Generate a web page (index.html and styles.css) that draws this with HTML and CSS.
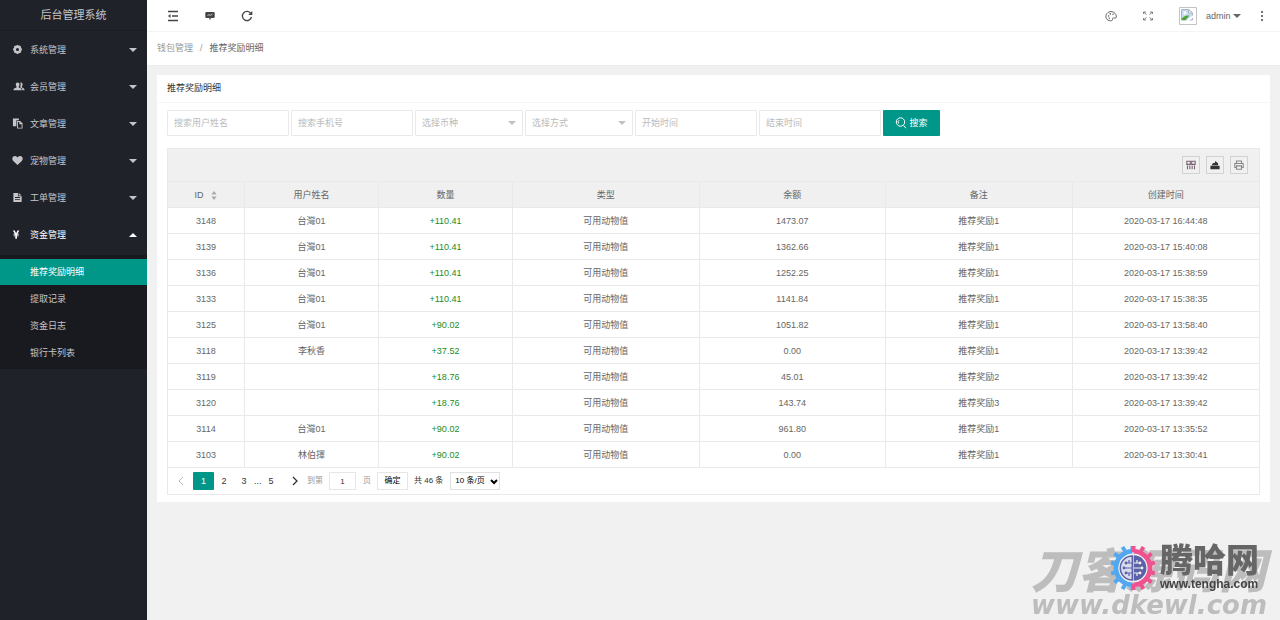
FILE: index.html
```html
<!DOCTYPE html>
<html lang="zh-CN">
<head>
<meta charset="utf-8">
<title>后台管理系统</title>
<meta name="viewport" content="width=device-width, initial-scale=1">
<link rel="stylesheet" href="styles.css">
</head>
<body>
<div class="app">
  <aside class="side">
    <div class="brand">后台管理系统</div>
    <nav class="menu">
      <button class="menu-item" type="button"><svg class="mi" viewBox="0 0 12 12"><path fill-rule="evenodd" d="M5 1h2l.4 1.2 1.2-.5 1.5 1.5-.6 1.2 1.3.4v2.2l-1.3.4.6 1.2-1.5 1.5-1.2-.5L7 11H5l-.4-1.400-1.200.5-1.500-1.500.6-1.200L1.200 7V4.800l1.300-.4-.6-1.200 1.500-1.500 1.200.5zM6 4.300a1.700 1.700 0 1 0 0 3.400 1.700 1.700 0 0 0 0-3.400z"/></svg><span>系统管理</span><svg class="caret" viewBox="0 0 8 4"><path d="M0 0h8L4 4z"/></svg></button>
      <button class="menu-item" type="button"><svg class="mi wide" viewBox="0 0 12 12"><path d="M4.500 1.500c1.500 0 2 1 2 2.200 0 1-.4 1.800-.8 2.300v1l2.600 1.300c.5.300.7.700.7 1.700H0c0-1 .2-1.400.7-1.700L3.300 7V6c-.5-.5-.8-1.300-.8-2.300 0-1.200.5-2.200 2-2.200zM8 1.500c1.400 0 1.900 1 1.900 2.200 0 1-.4 1.800-.8 2.300v.8l2.200 1.300c.6.300.7.900.7 1.900H9.700c0-1.300-.3-1.900-1-2.300L7 6.700c.5-.7.800-1.800.8-3 0-.8-.2-1.500-.6-2z"/></svg><span>会员管理</span><svg class="caret" viewBox="0 0 8 4"><path d="M0 0h8L4 4z"/></svg></button>
      <button class="menu-item" type="button"><svg class="mi" viewBox="0 0 12 12"><path fill-rule="evenodd" d="M1 .5h6.500v2H4.800V9H1zM5.500 3.300h3.300l2.700 2.500v5.700h-6zM6.500 4.300v6.200h4V6.800H8V4.300z"/></svg><span>文章管理</span><svg class="caret" viewBox="0 0 8 4"><path d="M0 0h8L4 4z"/></svg></button>
      <button class="menu-item" type="button"><svg class="mi" viewBox="0 0 12 12"><path d="M6 11L1.300 6.500C-1 4 1 1 3.300 1.200 4.700 1.300 5.500 2 6 2.800c.5-.8 1.300-1.500 2.700-1.600C11 1 13 4 10.700 6.500z"/></svg><span>宠物管理</span><svg class="caret" viewBox="0 0 8 4"><path d="M0 0h8L4 4z"/></svg></button>
      <button class="menu-item" type="button"><svg class="mi" viewBox="0 0 12 12"><path fill-rule="evenodd" d="M1.500 1h5v3.500h4V11h-9zM7.300 1l3.200 2.800H7.300zM3.300 5.500v1h5.400v-1zm0 2.300v1h5.400v-1z"/></svg><span>工单管理</span><svg class="caret" viewBox="0 0 8 4"><path d="M0 0h8L4 4z"/></svg></button>
      <button class="menu-item open" type="button" aria-expanded="true"><svg class="mi" viewBox="0 0 12 12"><path d="M1 1.500h2l1.500 3 1.500-3h2L6 5.200h1.300v1H5.400v.8h1.900v1H5.400v2.500H3.600V8H1.700V7h1.900v-.8H1.700v-1H3z"/></svg><span>资金管理</span><svg class="caret" viewBox="0 0 8 4"><path d="M0 4h8L4 0z"/></svg></button>
      <div class="sub">
        <a class="sub-item active" href="#">推荐奖励明细</a>
        <a class="sub-item" href="#">提取记录</a>
        <a class="sub-item" href="#">资金日志</a>
        <a class="sub-item" href="#">银行卡列表</a>
      </div>
    </nav>
  </aside>

  <div class="main">
    <header class="top">
      <div class="top-group">
        <button class="tool" type="button" aria-label="收起菜单"><svg class="ti" viewBox="0 0 12 12"><path d="M1 1.500h10M5 6h6M1 10.500h10" class="ln"/><path d="M1 6l2.500-2v4z"/></svg></button>
        <button class="tool" type="button" aria-label="消息"><svg class="ti" viewBox="0 0 12 12"><path d="M2.500 2h7q1.200 0 1.200 1v4q0 1-1.200 1H6.800L6 10.500 5.200 8H2.500Q1.300 8 1.300 7V3q0-1 1.200-1z"/><path d="M3.500 5.500l1.500-.8 1.500.6 2-1.200" class="ln light"/></svg></button>
        <button class="tool" type="button" aria-label="刷新"><svg class="ti" viewBox="0 0 12 12"><path d="M9.800 3.400A4.600 4.600 0 1 0 10.500 7" class="ln"/><path d="M11.300 1v4H7.200z"/></svg></button>
      </div>
      <div class="top-group">
        <button class="tool soft" type="button" aria-label="主题"><svg class="ti" viewBox="0 0 12 12"><path d="M3 10.200C.5 9 .3 5.500 2 3.500 4 1 8 1 10 3.300c1.300 1.400 1.800 3.700.8 4.700-.9.900-2-.7-3 .1-.8.700.2 1.700-.6 2.300-.7.500-2.700.5-4.200-.2z" class="ln thin"/><circle cx="3.500" cy="6" r=".8"/><circle cx="5.300" cy="3.900" r=".8"/><circle cx="8" cy="4.300" r=".8"/><circle cx="4.300" cy="8.300" r=".8"/></svg></button>
        <button class="tool soft" type="button" aria-label="全屏"><svg class="ti" viewBox="0 0 12 12"><path d="M1.500 4V2H4M2 2.500l2.500 2M8 2h2.500v2M10 2.500l-2.500 2M1.500 8v2H4M2 9.500l2.500-2M8 10h2.500V8M10 9.500l-2.500-2" class="ln faint"/></svg></button>
        <button class="user" type="button"><svg class="avatar" viewBox="0 0 18 18"><path d="M.5.500h17v17H.5z" fill="#fff" stroke="#c4c4c4"/><path d="M2.500 2.500h7l4 3.500v7h-11z" fill="#c9dcf5" stroke="#a9b4c2"/><path d="M9.500 2.500V6h4z" fill="#fff" stroke="#a9b4c2"/><circle cx="6" cy="6" r="1.500" fill="#fff"/><path d="M2.500 13c.5-3 4-5 8-4.500L6.500 13z" fill="#4ca532"/><path d="M7.500 14.500l7-5.500" stroke="#fff" stroke-width="2"/></svg><span>admin</span><svg class="caret" viewBox="0 0 8 4"><path d="M0 0h8L4 4z"/></svg></button>
        <button class="tool" type="button" aria-label="更多"><svg class="ti" viewBox="0 0 12 12"><circle cx="6" cy="2" r="1"/><circle cx="6" cy="6" r="1"/><circle cx="6" cy="10" r="1"/></svg></button>
      </div>
    </header>
    <div class="crumbs"><a href="#">钱包管理</a><span class="sep">/</span><span class="here">推荐奖励明细</span></div>

    <section class="card">
      <h1 class="card-title">推荐奖励明细</h1>
      <div class="card-body">
        <form class="search">
          <input class="field" type="text" placeholder="搜索用户姓名" aria-label="搜索用户姓名">
          <input class="field" type="text" placeholder="搜索手机号" aria-label="搜索手机号">
          <div class="pick"><select class="field" aria-label="选择币种"><option>选择币种</option></select><svg class="caret" viewBox="0 0 8 4"><path d="M0 0h8L4 4z"/></svg></div>
          <div class="pick"><select class="field" aria-label="选择方式"><option>选择方式</option></select><svg class="caret" viewBox="0 0 8 4"><path d="M0 0h8L4 4z"/></svg></div>
          <input class="field" type="text" placeholder="开始时间" aria-label="开始时间">
          <input class="field" type="text" placeholder="结束时间" aria-label="结束时间">
          <button class="go" type="button"><svg class="ti" viewBox="0 0 12 12"><circle cx="5.500" cy="5" r="4.200" class="ln thin"/><path d="M3.500 6.500A2.500 2.500 0 0 1 4 3.200M8.500 8.500l2.500 2.700" class="ln thin"/></svg>搜索</button>
        </form>

        <div class="grid">
          <div class="bar">
            <button class="bar-btn" type="button" aria-label="筛选列"><svg class="ti" viewBox="0 0 12 12"><path d="M1 1.500h4.200v3.700H1zM6.800 1.500H11v3.700H6.800zM1.800 6.500V11M4.600 6.500V11M7.400 6.500V11M10.200 6.500V11" class="ln plum"/></svg></button>
            <button class="bar-btn" type="button" aria-label="导出"><svg class="ti" viewBox="0 0 12 12"><path d="M.5 7h11v4H.5zM2.200 6.200C2.500 4 4.500 3.200 6 3.200V1.200L9.800 4 9.500 6.200z"/></svg></button>
            <button class="bar-btn pale" type="button" aria-label="打印"><svg class="ti" viewBox="0 0 12 12"><path d="M3 4V1.200h6V4M3 9H1V4.200h10V9H9M3 7h6v4H3z" class="ln"/></svg></button>
          </div>
          <table class="data">
            <colgroup><col class="c-id"><col class="c-mid"><col class="c-mid"><col><col><col><col></colgroup>
            <thead><tr><th>ID<svg class="sort" viewBox="0 0 8 10"><path d="M1 4l3-4 3 4zM1 6l3 4 3-4z"/></svg></th><th>用户姓名</th><th>数量</th><th>类型</th><th>余额</th><th>备注</th><th>创建时间</th></tr></thead>
            <tbody>
              <tr><td>3148</td><td>台灣01</td><td class="plus">+110.41</td><td>可用动物值</td><td>1473.07</td><td>推荐奖励1</td><td>2020-03-17 16:44:48</td></tr>
              <tr><td>3139</td><td>台灣01</td><td class="plus">+110.41</td><td>可用动物值</td><td>1362.66</td><td>推荐奖励1</td><td>2020-03-17 15:40:08</td></tr>
              <tr><td>3136</td><td>台灣01</td><td class="plus">+110.41</td><td>可用动物值</td><td>1252.25</td><td>推荐奖励1</td><td>2020-03-17 15:38:59</td></tr>
              <tr><td>3133</td><td>台灣01</td><td class="plus">+110.41</td><td>可用动物值</td><td>1141.84</td><td>推荐奖励1</td><td>2020-03-17 15:38:35</td></tr>
              <tr><td>3125</td><td>台灣01</td><td class="plus">+90.02</td><td>可用动物值</td><td>1051.82</td><td>推荐奖励1</td><td>2020-03-17 13:58:40</td></tr>
              <tr><td>3118</td><td>李秋香</td><td class="plus">+37.52</td><td>可用动物值</td><td>0.00</td><td>推荐奖励1</td><td>2020-03-17 13:39:42</td></tr>
              <tr><td>3119</td><td></td><td class="plus">+18.76</td><td>可用动物值</td><td>45.01</td><td>推荐奖励2</td><td>2020-03-17 13:39:42</td></tr>
              <tr><td>3120</td><td></td><td class="plus">+18.76</td><td>可用动物值</td><td>143.74</td><td>推荐奖励3</td><td>2020-03-17 13:39:42</td></tr>
              <tr><td>3114</td><td>台灣01</td><td class="plus">+90.02</td><td>可用动物值</td><td>961.80</td><td>推荐奖励1</td><td>2020-03-17 13:35:52</td></tr>
              <tr><td>3103</td><td>林伯擇</td><td class="plus">+90.02</td><td>可用动物值</td><td>0.00</td><td>推荐奖励1</td><td>2020-03-17 13:30:41</td></tr>
            </tbody>
          </table>
          <div class="pager">
            <button class="pg off" type="button" aria-label="上一页"><svg class="arr" viewBox="0 0 6 10"><path d="M5 1L1 5l4 4" class="ln thin"/></svg></button>
            <button class="pg on" type="button">1</button>
            <button class="pg" type="button">2</button>
            <button class="pg" type="button">3</button>
            <span class="dots">...</span>
            <button class="pg" type="button">5</button>
            <button class="pg next" type="button" aria-label="下一页"><svg class="arr" viewBox="0 0 6 10"><path d="M1 1l4 4-4 4" class="ln"/></svg></button>
            <label class="jump">到第<input class="num" type="text" value="1">页</label>
            <button class="ok" type="button">确定</button>
            <span class="total">共 46 条</span>
            <div class="size-box"><select class="size" aria-label="每页条数"><option>10 条/页</option></select><svg class="chev" viewBox="0 0 8 6"><path d="M1 1l3 3 3-3"/></svg></div>
          </div>
        </div>
      </div>
    </section>
  </div>
</div>

<div class="mark">
  <div class="mark-name">刀客源码网</div>
  <div class="mark-url">www.dkewl.com</div>
  <div class="logo">
    <svg class="gear" viewBox="0 0 44 44">
      <g fill="none" stroke="#52a8f0"><path d="M21.500 5.500a16.500 16.500 0 0 0 0 33" stroke-width="5"/><path d="M21.500 0v6M14 5L11.500 1M7 10.500L3.500 7.500M4.500 18L0 16.500M4.500 26L0 27.500M7 33.500L3.500 36.500M14 39L11.500 43M21.500 38v6" stroke-width="4"/></g>
      <g fill="none" stroke="#f0528f"><path d="M22.500 5.500a16.500 16.500 0 0 1 0 33" stroke-width="5"/><path d="M22.500 0v6M30 5L32.500 1M37 10.500L40.500 7.500M39.500 18L44 16.500M39.500 26L44 27.500M37 33.500L40.500 36.500M30 39L32.500 43M22.500 38v6" stroke-width="4"/></g>
      <circle cx="22" cy="22" r="14.500" fill="#f1f1f1"/>
      <path d="M21.300 10a12 12 0 0 0 0 24z" fill="#d9dced" stroke="#5b62a8" stroke-width="1.500"/>
      <path d="M22.700 9.300a12.700 12.700 0 0 1 0 25.400z" fill="#5b62a8"/>
      <path d="M21 17h-5M21 22h-8M21 27h-5M18 17v-3M18 27v3" fill="none" stroke="#5b62a8" stroke-width="1.200"/>
      <path d="M23 17h5M23 22h8M23 27h5M26 17v-3M26 27v3" fill="none" stroke="#f1f1f1" stroke-width="1.200"/>
      <g fill="#5b62a8"><circle cx="15" cy="17" r="1.400"/><circle cx="13" cy="22" r="1.400"/><circle cx="15" cy="27" r="1.400"/></g>
      <g fill="#f1f1f1"><circle cx="29" cy="17" r="1.400"/><circle cx="31" cy="22" r="1.400"/><circle cx="29" cy="27" r="1.400"/></g>
    </svg>
    <div class="logo-text"><span class="logo-name">腾哈网</span><span class="logo-url">www.tengha.com</span></div>
  </div>
</div>
</body>
</html>
```
FILE: styles.css
```css
* { box-sizing: border-box; }
body {
  margin: 0;
  background: #f1f1f1;
  color: #666;
  font: 9px/12px "Liberation Sans", "Noto Sans CJK SC", sans-serif;
}
button, input, select { font: inherit; color: inherit; margin: 0; padding: 0; }
button { border: 0; background: none; }
a { color: inherit; text-decoration: none; }
svg { display: block; flex: none; fill: currentColor; }
.ln { fill: none; stroke: currentColor; stroke-width: 1.3; }
.thin { stroke-width: 1; }
.faint { stroke-width: 0.8; }
.light { stroke: #fff; stroke-width: 0.7; }
.plum { stroke: #7a6273; }
.caret { width: 8px; height: 4px; }

.app { display: flex; min-height: 100vh; }

/* Sidebar */
.side { flex: none; width: 147px; background: #20222a; color: #c4c5c8; }
.brand {
  height: 31px;
  border-bottom: 1px solid #1b1d24;
  font-size: 11px;
  line-height: 30px;
  text-align: center;
}
.menu { display: flex; flex-direction: column; }
.menu-item {
  display: flex;
  align-items: center;
  height: 37px;
  padding: 0 10px 0 12px;
  text-align: left;
}
.menu-item span { flex: 1; }
.menu-item.open { color: #fff; }
.mi { width: 11px; height: 11px; margin-right: 7px; }
.mi.wide { width: 14px; margin-right: 4px; }
.sub {
  display: flex;
  flex-direction: column;
  gap: 1px;
  margin-top: 2px;
  padding: 4px 0 3px;
  background: #191a20;
}
.sub-item { padding: 0 30px; line-height: 26px; }
.sub-item.active { background: #009688; color: #fff; }

/* Top bar */
.main { flex: 1; min-width: 0; }
.top {
  display: flex;
  justify-content: space-between;
  height: 32px;
  padding-left: 7px;
  border-bottom: 1px solid #f4f4f4;
  background: #fff;
}
.top-group { display: flex; }
.tool { display: flex; align-items: center; justify-content: center; width: 37px; color: #444; }
.tool.soft { color: #666; }
.ti { width: 12px; height: 12px; }
.user { display: flex; align-items: center; width: 77px; padding-left: 13px; }
.user .avatar { width: 18px; height: 18px; margin-right: 9px; }
.user .caret { margin-left: 2px; }
.crumbs {
  height: 34px;
  padding: 0 10px;
  border-bottom: 1px solid #ececec;
  background: #fff;
  color: #999;
  line-height: 33px;
}
.sep { margin: 0 7px; }
.here { color: #666; }

/* Card */
.card { margin: 9px 10px; background: #fff; }
.card-title {
  margin: 0;
  padding: 0 10px;
  border-bottom: 1px solid #f6f6f6;
  color: #333;
  font-size: 9px;
  font-weight: 400;
  line-height: 27px;
}
.card-body { padding: 7px 10px; }
.search { display: flex; flex-wrap: wrap; gap: 2px; margin-bottom: 12px; }
.field {
  width: 122px;
  height: 26px;
  padding: 0 6px;
  border: 1px solid #e9e9e9;
  border-radius: 1px;
  background: #fff;
}
.field::placeholder { color: #bbb; }
.pick { position: relative; }
.pick .field { width: 108px; color: #bbb; appearance: none; }
.pick .caret { position: absolute; top: 11px; right: 7px; color: #c2c2c2; pointer-events: none; }
.go {
  display: flex;
  align-items: center;
  justify-content: center;
  gap: 2px;
  width: 57px;
  border-radius: 1px;
  background: #009688;
  color: #fff;
}

/* Table */
.grid { border: 1px solid #e9e9e9; }
.bar {
  display: flex;
  justify-content: flex-end;
  gap: 6px;
  padding: 7px 11px;
  border-bottom: 1px solid #e9e9e9;
  background: #f0f0f0;
}
.bar-btn {
  display: grid;
  place-items: center;
  width: 18px;
  height: 18px;
  border: 1px solid #d2d2d2;
  color: #333;
}
.bar-btn .ti { width: 10px; height: 10px; }
.bar-btn.pale { color: #888; }
.data { width: 100%; border-collapse: separate; border-spacing: 0; table-layout: fixed; }
.c-id { width: 77px; }
.c-mid { width: 134px; }
.data th, .data td {
  height: 26px;
  padding: 0;
  border-right: 1px solid #e9e9e9;
  border-bottom: 1px solid #e9e9e9;
  font-weight: 400;
  text-align: center;
}
.data th { background: #f0f0f0; }
.data th:last-child, .data td:last-child { border-right: 0; }
.data .plus { color: #228b22; }
.sort { display: inline-block; width: 8px; height: 9px; margin-left: 6px; color: #aaa; vertical-align: -2px; }

/* Pager */
.pager { display: flex; align-items: center; height: 26px; padding-left: 3px; font-size: 8px; color: #333; }
.pg { display: grid; place-items: center; width: 20px; height: 18px; font-size: 9px; }
.pg.on { width: 21px; margin-left: 2px; border-radius: 1px; background: #009688; color: #fff; }
.pg.off { color: #bbb; }
.pg.next { width: 26px; padding-left: 2px; }
.arr { width: 6px; height: 10px; }
.dots { width: 7px; font-size: 9px; text-align: center; }
.jump { display: flex; align-items: center; color: #999; }
.num {
  width: 27px;
  height: 18px;
  margin: 0 7px 0 6px;
  border: 1px solid #e6e6e6;
  color: #333;
  text-align: center;
}
.ok { width: 31px; height: 18px; margin: 0 6px; border: 1px solid #e6e6e6; color: #000; }
.size-box { position: relative; margin-left: 7px; }
.size {
  width: 50px;
  height: 18px;
  padding-left: 4px;
  border: 1px solid #e0e0e0;
  background: #fff;
  color: #000;
  appearance: none;
}
.chev { position: absolute; top: 7px; right: 2px; width: 8px; height: 6px; pointer-events: none; }
.chev path { fill: none; stroke: #000; stroke-width: 2; }

/* Watermark */
.mark {
  position: fixed;
  right: 13px;
  bottom: 2px;
  color: #bdbdbd;
  font-weight: 900;
  font-style: italic;
  white-space: nowrap;
  pointer-events: none;
}
.mark-name { font-size: 47px; line-height: 40px; }
.mark-url { font-family: "DejaVu Sans", sans-serif; font-size: 26px; line-height: 26px; text-align: right; }
.logo {
  position: absolute;
  right: 8px;
  top: -6px;
  display: flex;
  gap: 5px;
  color: #555;
  font-style: normal;
}
.gear { width: 44px; height: 44px; }
.logo-text { display: flex; flex-direction: column; }
.logo-name { font-size: 33px; line-height: 30px; color: #666; }
.logo-url { color: #444; font-size: 12px; font-weight: 700; line-height: 16px; }
```
